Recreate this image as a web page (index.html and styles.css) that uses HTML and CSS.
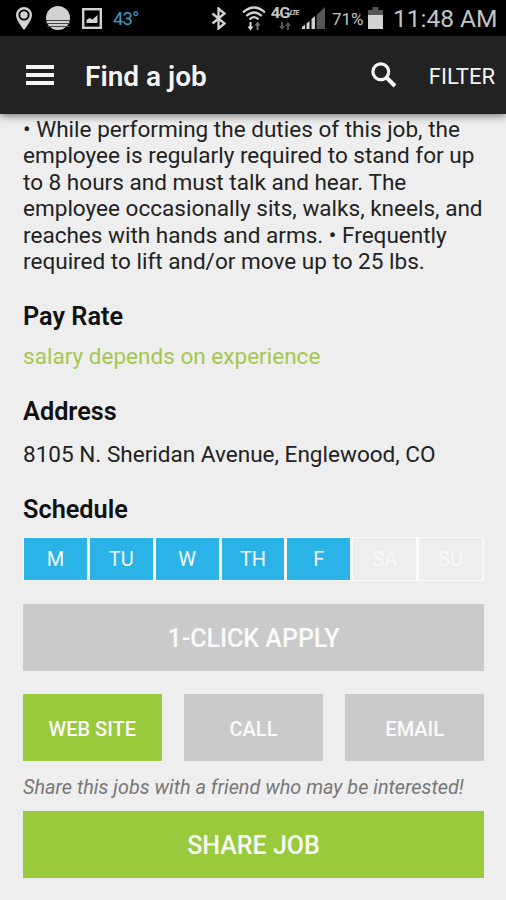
FILE: index.html
```
<!doctype html>
<html>
<head>
	<meta charset="utf-8">
	<title>Find a job</title>
	<link rel="stylesheet" href="styles.css">
</head>
<body>
	<!-- status bar -->
	<div class="status">
		<svg class="pin" width="16" height="23" viewBox="0 0 16 23"><path fill="#d2d2d2" fill-rule="evenodd" d="M8 0a8 8 0 0 0-8 8c0 5.500 8 15 8 15s8-9.500 8-15a8 8 0 0 0-8-8zM8 2.400a5.600 5.600 0 1 1 0 11.200a5.600 5.600 0 0 1 0-11.200z"/><circle cx="8" cy="8" r="3.800" fill="#d2d2d2"/></svg>
		<svg class="globe" width="24" height="24" viewBox="0 0 24 24"><circle cx="12" cy="12" r="12" fill="#d2d2d2"/><path d="M0 14.500h24M0 17.500h24M1 20.500h22" stroke="#444" stroke-width="1"/></svg>
		<svg class="photo" width="20" height="21" viewBox="0 0 20 21"><rect x="1.200" y="1.200" width="17.600" height="18.600" fill="none" stroke="#d2d2d2" stroke-width="2.400"/><path fill="#d2d2d2" d="M4.500 15v-3l3-2 3 1.500 5-4.500v8z"/></svg>
		<span class="temp">43°</span>
		<svg class="bt" width="16" height="23" viewBox="0 0 16 23"><path d="M1.500 6.500l12 10-6 5v-20l6 5-12 10" fill="none" stroke="#d2d2d2" stroke-width="2.300"/></svg>
		<svg class="wifi" width="24" height="25" viewBox="0 0 24 25"><g fill="none" stroke="#d2d2d2" stroke-width="2.200"><path d="M1 6.500q11-10 22 0M4.300 10q7.700-7 15.400 0M7.500 13.400q4.500-4.500 9 0"/></g><path fill="#e0e0e0" d="M7.500 16h2v4.500h2L8.500 24.500l-3-4h2z"/><path fill="#777" d="M14.500 24v-4.500h-2l3-4 3 4h-2V24z"/></svg>
		<div class="lte">
			<b>4G<i>LTE</i></b>
			<svg width="12" height="8" viewBox="0 0 12 8"><path fill="#555" d="M2 0h2v4h2L3 8 0 4h2zM8 8V4H6l3-4 3 4h-2v4z"/></svg>
		</div>
		<svg class="signal" width="23" height="22" viewBox="0 0 23 22"><path fill="#555" d="M14.500 8L23 0v22h-8.500z"/><path fill="#d2d2d2" d="M0 22v-2l3-2.500V22zM4.500 22v-5.500l3-2.500v8zM9.500 22V12l3.500-3v13z"/></svg>
		<span class="percent">71%</span>
		<svg class="battery" width="15" height="22" viewBox="0 0 15 22"><path fill="#555" d="M4.500 0h6v3H15v5H0V3h4.500z"/><path fill="#d2d2d2" d="M0 8h15v14H0z"/></svg>
		<span class="time">11:48 AM</span>
	</div>

	<!-- top bar -->
	<div class="header">
		<div class="menu"><span></span><span></span><span></span></div>
		<h1>Find a job</h1>
		<svg class="search" width="26" height="26" viewBox="0 0 26 26"><circle cx="9.800" cy="9.800" r="7.900" fill="none" stroke="#f4f4f4" stroke-width="3.200"/><path d="M15.500 15.500l8.500 8.500" stroke="#f4f4f4" stroke-width="4"/></svg>
		<a class="filter">FILTER</a>
	</div>

	<!-- job detail -->
	<div class="content">
		<p class="desc">• While performing the duties of this job, the<br>employee is regularly required to stand for up<br>to 8 hours and must talk and hear. The<br>employee occasionally sits, walks, kneels, and<br>reaches with hands and arms. • Frequently<br>required to lift and/or move up to 25 lbs.</p>

		<h2>Pay Rate</h2>
		<p class="salary">salary depends on experience</p>

		<h2>Address</h2>
		<p class="address">8105 N. Sheridan Avenue, Englewood, CO</p>

		<h2>Schedule</h2>
		<ul class="days">
			<li class="on">M</li>
			<li class="on">TU</li>
			<li class="on">W</li>
			<li class="on">TH</li>
			<li class="on">F</li>
			<li>SA</li>
			<li>SU</li>
		</ul>

		<a class="btn big">1-CLICK APPLY</a>
		<div class="row">
			<a class="btn green">WEB SITE</a>
			<a class="btn">CALL</a>
			<a class="btn">EMAIL</a>
		</div>
		<p class="note">Share this jobs with a friend who may be interested!</p>
		<a class="btn big green">SHARE JOB</a>
	</div>
</body>
</html>
```
FILE: styles.css
```
*{box-sizing:border-box;}
body,h1,h2,p,ul{margin:0;padding:0;list-style:none;}
body{
	width:506px;
	height:900px;
	overflow:hidden;
	background-color:#eee;
	color:#222;
	font-family:Roboto,"Liberation Sans",sans-serif;
	white-space:nowrap;
}
svg{display:block;flex:none;}

/* status bar */
.status{
	height:36px;
	padding-left:16px;
	background-color:#000;
	color:#c4c4c4;
	display:flex;
	align-items:center;
}
.globe{margin-left:14px;}
.photo{margin-left:12px;}
.temp{
	width:26px;
	margin-left:11px;
	padding-top:1px;
	color:#3d9cc8;
	font-size:18.5px;
	letter-spacing:-0.8px;
	line-height:20px;
}
.bt{margin-left:72px;}
.wifi{margin-left:15px;}
.lte{
	width:28px;
	margin-left:5px;
	display:flex;
	flex-direction:column;
	align-items:center;
}
/* wide, flat lettering */
.lte b{
	margin-bottom:2px;
	font-size:15px;
	line-height:14px;
	letter-spacing:-0.8px;
	transform:scaleX(1.1);
}
.lte i{
	font-size:7px;
	letter-spacing:-1px;
	vertical-align:3px;
}
.signal{margin-left:3px;}
.percent{
	width:34px;
	margin-left:7px;
	padding-top:1px;
	font-size:17px;
}
.battery{margin-left:2px;}
.time{
	margin-left:10px;
	padding-top:1px;
	font-size:24.5px;
}

/* top bar */
.header{
	height:78px;
	padding:0 11px 0 26px;
	background-color:#222;
	color:#f4f4f4;
	display:flex;
	align-items:center;
	position:relative;
	box-shadow:0 2px 8px rgba(0,0,0,0.5);
}
.menu{
	width:28px;
	display:flex;
	flex-direction:column;
	gap:4px;
}
.menu span{
	height:4px;
	background-color:#f4f4f4;
}
.header h1{
	margin-left:31px;
	padding-top:3px;
	font-size:28px;
	font-weight:600;
	line-height:32px;
}
.search{margin-left:auto;}
.filter{
	margin-left:32px;
	padding-top:2px;
	font-size:22px;
}

/* job detail */
.content{padding:3px 22px 0 23px;}
.desc,.salary,.address{
	font-size:22.55px;
	line-height:26.4px;
}
h2{
	margin-top:27px;
	color:#111;
	font-size:25.3px;
	font-weight:600;
	line-height:30px;
}
.salary{
	margin-top:12px;
	color:#a4c84c;
}
.salary + h2{margin-top:26px;}
.address{margin-top:15px;}

/* working days */
.days{
	height:44px;
	margin-top:11.8px;
	display:flex;
}
.days li{
	flex:1;
	border:1px solid #fafafa;
	border-right-width:2px;
	color:#f8f8f8;
	font-size:20px;
	line-height:43px;
	text-align:center;
}
.days .on{background-color:#2ab3e6;}

/* buttons */
.btn{
	flex:1;
	height:67px;
	background-color:#cacaca;
	color:#fafafa;
	font-size:20px;
	font-weight:500;
	line-height:70px;
	text-align:center;
}
.big{
	display:block;
	font-size:25px;
}
.green{background-color:#98ca3b;}
.days + .btn{margin-top:23px;}
.row{
	margin-top:23px;
	display:flex;
	gap:22.500px;
}
.note{
	margin:14px 0 11px;
	color:#777;
	font-size:19.85px;
	font-style:italic;
	line-height:25px;
}
```
